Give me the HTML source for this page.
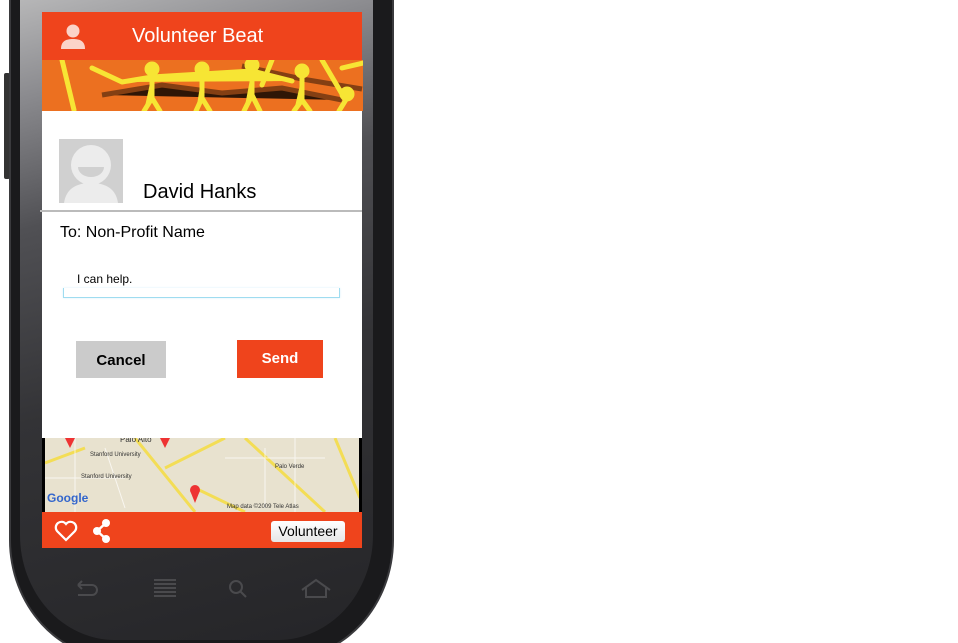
<!DOCTYPE html>
<html style="overflow:hidden;height:643px"><head><meta charset="utf-8"><style>
*{margin:0;padding:0;box-sizing:border-box}
body{width:958px;height:643px;background:#fff;position:relative;overflow:hidden;font-family:"Liberation Sans",sans-serif}
.phone{position:absolute;left:9px;top:-40px;width:385px;height:700px;border-radius:40px 40px 110px 110px/40px 40px 120px 120px;background:#1a1a1c;border:2px solid #3a3a3d}
.bezel{position:absolute;left:20px;top:-40px;width:353px;height:680px;border-radius:30px 30px 95px 95px/30px 30px 105px 105px;background:linear-gradient(165deg,#c8c8c8 0,#8a8a8e 18%,#505054 35%,#333336 60%,#252528 100%)}
.btn{position:absolute;left:4px;top:73px;width:6px;height:106px;background:#333;border-radius:2px}
.screen{position:absolute;left:42px;top:12px;width:320px;height:536px;background:#000}
.hdr{position:absolute;left:0;top:0;width:320px;height:48px;background:#ef441c;color:#fff;font-size:20px;line-height:48px}
.banner{position:absolute;left:0;top:48px;width:321px;height:51px;background:#ec7020;overflow:hidden}
.card{position:absolute;left:0;top:99px;width:320px;height:327px;background:#fff}
.map{position:absolute;left:3px;top:426px;width:314px;height:74px;background:#e8e2cf;overflow:hidden}
.ftr{position:absolute;left:0;top:500px;width:320px;height:36px;background:#ef441c}
</style></head><body>
<div class="btn"></div>
<div class="phone"></div>
<div class="bezel"></div>
<svg style="position:absolute;left:60px;top:570px" width="300" height="40">
<g stroke="#4a4a4d" stroke-width="2" fill="none">
<path d="M18 15h14a5 5 0 0 1 0 10h-14M18 15l4-4M18 15l4 4"/>
<path d="M94 10h22M94 14h22M94 18h22M94 22h22M94 26h22"/>
<circle cx="176" cy="17" r="6"/><path d="M180 21l6 6"/>
<path d="M242 20l14-10 14 10M246 18v9h20v-9"/>
</g></svg>
<div class="screen">
<div class="hdr"><svg style="position:absolute;left:17px;top:11px" width="28" height="26"><circle cx="14" cy="8" r="6.5" fill="#fbd3c8"/><path d="M2 26c0-8 5-10 12-10s12 2 12 10z" fill="#fbd3c8"/></svg><span style="position:absolute;left:90px">Volunteer Beat</span></div>
<div class="banner"><svg width="321" height="51">
<g stroke="#6b3410" stroke-width="5" opacity=".8"><path d="M60 35l60-10 60 8 60-5 60 12"/><path d="M200 6l60 13 60 10"/></g>
<g fill="#f7e534" stroke="#f7e534" stroke-width="5" stroke-linecap="round">
<circle cx="110" cy="9" r="5"/><circle cx="160" cy="9" r="5"/><circle cx="210" cy="5" r="5"/><circle cx="260" cy="11" r="5"/><circle cx="305" cy="34" r="5"/>
<path d="M20 0l12 50M80 22l30-5 50-3 50-3 40 10M110 14v24l-8 13M110 38l8 13M160 14v24l-6 13M160 38l8 13M210 9v26l-8 16M210 35l8 16M260 16v24l-8 11M260 40l8 11M230 0l-10 25M280 0l20 34M305 38l-8 13M300 8l21-5M50 8l30 14"/>
</g></svg></div>
<div class="card">
<div style="position:absolute;left:17px;top:28px;width:64px;height:64px;background:#d0d0d0;overflow:hidden"><svg width="64" height="64"><circle cx="32" cy="26" r="20" fill="#ececec"/><path d="M19 28a13 10 0 0 0 26 0z" fill="#d0d0d0"/><path d="M5 64c2-14 12-20 27-20s25 6 27 20z" fill="#ececec"/></svg></div>
<div style="position:absolute;left:101px;top:70px;font-size:20px;color:#000">David Hanks</div>
<div style="position:absolute;left:-2px;top:99px;width:322px;height:2px;background:#bbb"></div>
<div style="position:absolute;left:18px;top:113px;font-size:16px;color:#000">To: Non-Profit Name</div>
<div style="position:absolute;left:35px;top:161px;font-size:12px;color:#000">I can help.</div>
<div style="position:absolute;left:21px;top:177px;width:277px;height:10px;border:1px solid #9fdcf0;border-top:none;box-shadow:0 0 2px #d7f1fa"></div>
<div style="position:absolute;left:34px;top:230px;width:90px;height:37px;background:#cbcbcb;font-size:15px;font-weight:bold;line-height:39px;text-align:center;color:#000">Cancel</div>
<div style="position:absolute;left:195px;top:229px;width:86px;height:38px;background:#ef441c;font-size:15px;font-weight:bold;line-height:38px;text-align:center;color:#fff">Send</div>
</div>
<div class="map"><svg width="314" height="74">
<g stroke="#f3dd55" stroke-width="3" fill="none"><path d="M90 0l60 74M120 30l60-30M200 0l80 74M290 0l25 60M0 25l40-15M150 50l50 24"/></g>
<g stroke="#fff" stroke-width="1" opacity=".7"><path d="M0 40h80M30 0v74M60 10l20 60M180 20h100M220 10v60M250 0v74"/></g>
<circle cx="150" cy="52" r="5" fill="#e33"/><path d="M146 55l4 10 4-10z" fill="#e33"/>
<path d="M20 0l5 10 5-10zM115 0l5 10 5-10z" fill="#e33"/>
<text x="75" y="4" font-size="8" fill="#333">Palo Alto</text>
<text x="45" y="18" font-size="6" fill="#333">Stanford University</text>
<text x="36" y="40" font-size="6" fill="#333">Stanford University</text>
<text x="230" y="30" font-size="6" fill="#333">Palo Verde</text>
<text x="2" y="64" font-size="12" fill="#3366cc" font-weight="bold">Google</text>
<text x="182" y="70" font-size="6" fill="#333">Map data ©2009 Tele Atlas</text>
</svg></div>
<div class="ftr">
<svg style="position:absolute;left:12px;top:7px" width="60" height="24"><path d="M12 21l-9-9a5 5 0 0 1 9-7a5 5 0 0 1 9 7z" fill="none" stroke="#fff" stroke-width="2.2"/><g fill="#fff"><circle cx="52" cy="4" r="4"/><circle cx="43" cy="12" r="4"/><circle cx="52" cy="20" r="4"/></g><path d="M43 12l9-8M43 12l9 8" stroke="#fff" stroke-width="2.5"/></svg>
<div style="position:absolute;left:229px;top:9px;width:74px;height:21px;background:linear-gradient(#fff,#e6e6e6);border-radius:3px;font-size:14px;line-height:21px;text-align:center;color:#000">Volunteer</div>
</div>
</div>
</body></html>
